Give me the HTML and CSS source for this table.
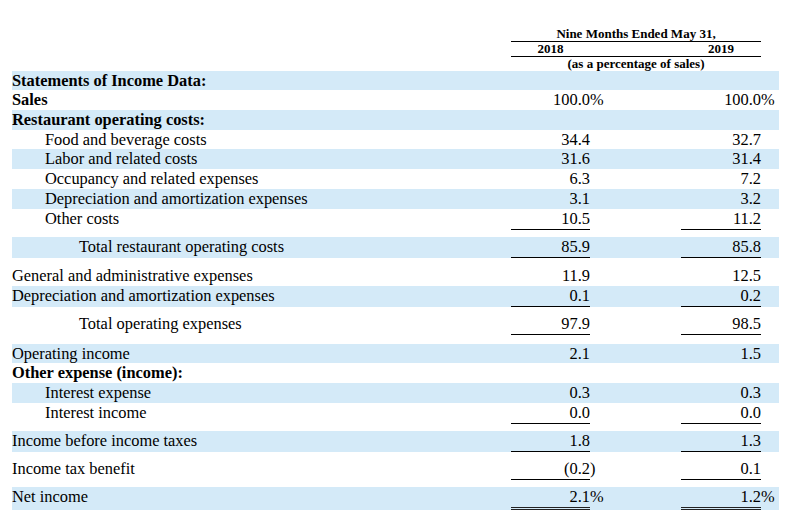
FILE: index.html
```html
<!DOCTYPE html>
<html>
<head>
<meta charset="utf-8">
<link rel="stylesheet" href="styles.css">
</head>
<body>
<table class="fin">
  <colgroup>
    <col class="c-label"><col class="c-gap1"><col class="c-v"><col class="c-p1"><col class="c-gap2"><col class="c-v2"><col class="c-p2">
  </colgroup>
  <tr class="h h1">
    <td colspan="2"></td>
    <td colspan="4" class="ctr ul">Nine Months Ended May 31,</td>
    <td></td>
  </tr>
  <tr class="h h2">
    <td colspan="2"></td>
    <td class="ctr ul">2018</td>
    <td class="ul"></td>
    <td class="ul"></td>
    <td class="ctr ul">2019</td>
    <td></td>
  </tr>
  <tr class="h h3">
    <td colspan="2"></td>
    <td colspan="4" class="ctr">(as a percentage of sales)</td>
    <td></td>
  </tr>

  <tr class="r band b19"><td class="lbl bold">Statements of Income Data:</td><td></td><td></td><td></td><td></td><td></td><td></td></tr>
  <tr class="r"><td class="lbl bold">Sales</td><td></td><td class="v">100.0</td><td class="p">%</td><td></td><td class="v">100.0</td><td class="p">%</td></tr>
  <tr class="r band"><td class="lbl bold">Restaurant operating costs:</td><td></td><td></td><td></td><td></td><td></td><td></td></tr>
  <tr class="r b19"><td class="lbl in1">Food and beverage costs</td><td></td><td class="v">34.4</td><td></td><td></td><td class="v">32.7</td><td></td></tr>
  <tr class="r band"><td class="lbl in1">Labor and related costs</td><td></td><td class="v">31.6</td><td></td><td></td><td class="v">31.4</td><td></td></tr>
  <tr class="r"><td class="lbl in1">Occupancy and related expenses</td><td></td><td class="v">6.3</td><td></td><td></td><td class="v">7.2</td><td></td></tr>
  <tr class="r band"><td class="lbl in1">Depreciation and amortization expenses</td><td></td><td class="v">3.1</td><td></td><td></td><td class="v">3.2</td><td></td></tr>
  <tr class="r"><td class="lbl in1">Other costs</td><td></td><td class="v ul">10.5</td><td></td><td></td><td class="v ul">11.2</td><td></td></tr>
  <tr class="sp s7"><td colspan="7"></td></tr>
  <tr class="r band"><td class="lbl in2">Total restaurant operating costs</td><td></td><td class="v ul">85.9</td><td></td><td></td><td class="v ul">85.8</td><td></td></tr>
  <tr class="sp s8"><td colspan="7"></td></tr>
  <tr class="r"><td class="lbl">General and administrative expenses</td><td></td><td class="v">11.9</td><td></td><td></td><td class="v">12.5</td><td></td></tr>
  <tr class="r band"><td class="lbl">Depreciation and amortization expenses</td><td></td><td class="v ul">0.1</td><td></td><td></td><td class="v ul">0.2</td><td></td></tr>
  <tr class="sp s7"><td colspan="7"></td></tr>
  <tr class="r"><td class="lbl in2">Total operating expenses</td><td></td><td class="v ul">97.9</td><td></td><td></td><td class="v ul">98.5</td><td></td></tr>
  <tr class="sp s9"><td colspan="7"></td></tr>
  <tr class="r band b19"><td class="lbl">Operating income</td><td></td><td class="v">2.1</td><td></td><td></td><td class="v">1.5</td><td></td></tr>
  <tr class="r"><td class="lbl bold">Other expense (income):</td><td></td><td></td><td></td><td></td><td></td><td></td></tr>
  <tr class="r band"><td class="lbl in1">Interest expense</td><td></td><td class="v">0.3</td><td></td><td></td><td class="v">0.3</td><td></td></tr>
  <tr class="r"><td class="lbl in1">Interest income</td><td></td><td class="v ul">0.0</td><td></td><td></td><td class="v ul">0.0</td><td></td></tr>
  <tr class="sp s7"><td colspan="7"></td></tr>
  <tr class="r band"><td class="lbl">Income before income taxes</td><td></td><td class="v ul">1.8</td><td></td><td></td><td class="v ul">1.3</td><td></td></tr>
  <tr class="sp s7"><td colspan="7"></td></tr>
  <tr class="r"><td class="lbl">Income tax benefit</td><td></td><td class="v ul">(0.2</td><td class="p">)</td><td></td><td class="v ul">0.1</td><td></td></tr>
  <tr class="sp s7"><td colspan="7"></td></tr>
  <tr class="r band"><td class="lbl">Net income</td><td></td><td class="v dul">2.1</td><td class="p">%</td><td></td><td class="v dul">1.2</td><td class="p">%</td></tr>
</table>
</body>
</html>
```

FILE: styles.css
```css
html, body {
  margin: 0;
  padding: 0;
  background: #fff;
}

body {
  font-family: "Liberation Serif", "Times New Roman", serif;
  color: #000;
}

.fin {
  margin: 26px 0 0 12px;
  width: 767px;
  table-layout: fixed;
  border-collapse: separate;
  border-spacing: 0;
  font-size: 16.4px;
}

.c-label { width: 493px; }
.c-gap1 { width: 6px; }
.c-v { width: 79px; }
.c-p1 { width: 15px; }
.c-gap2 { width: 76px; }
.c-v2 { width: 80px; }
.c-p2 { width: 18px; }

.fin td {
  padding: 0;
  white-space: nowrap;
  vertical-align: top;
}

.h td {
  font-size: 13px;
  font-weight: bold;
}

.h1 td { line-height: 15px; }
.h2 td { line-height: 14px; }
.h3 td { line-height: 14px; }

.ctr { text-align: center; }

.ul { border-bottom: 1px solid #000; }

.r td { line-height: 20px; }
.r.b19 td { line-height: 19px; }

.band td { background: #d4eaf8; }

.lbl { text-align: left; }
.bold { font-weight: bold; }
.in1 { padding-left: 33px !important; }
.in2 { padding-left: 67px !important; }

.v { text-align: right; }
.p { text-align: left; }

.dul { border-bottom: 3px double #222; }

.sp td { padding: 0; line-height: 0; font-size: 0; }
.s7 td { height: 7px; }
.s8 td { height: 8px; }
.s9 td { height: 9px; }
```
